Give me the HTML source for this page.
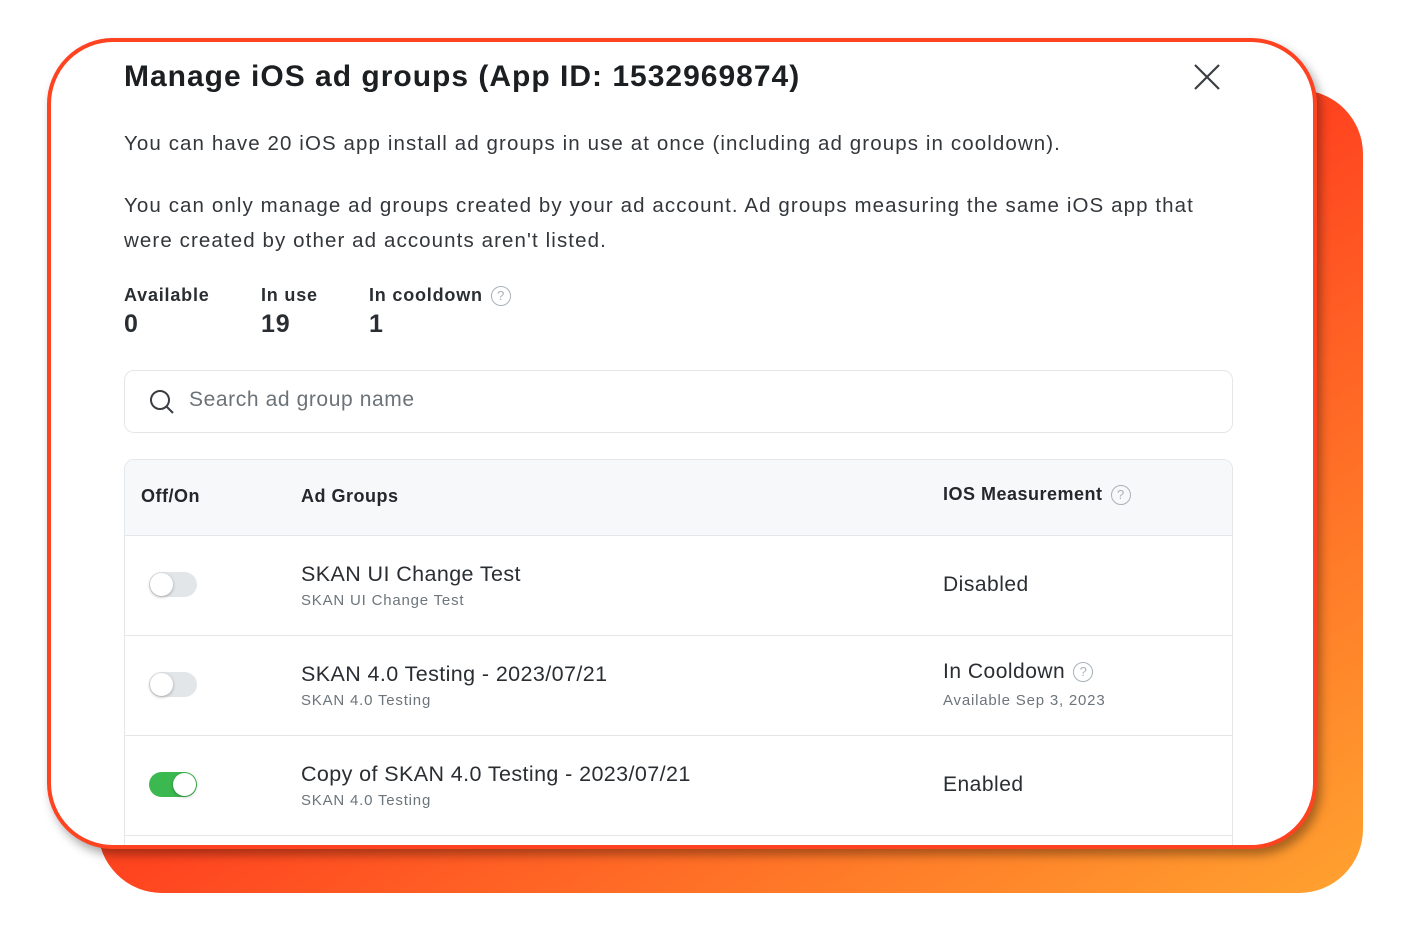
<!DOCTYPE html>
<html><head><meta charset="utf-8"><style>
*{box-sizing:border-box;margin:0;padding:0}
body{width:1407px;height:929px;background:#fff;position:relative;overflow:hidden;font-family:"Liberation Sans",sans-serif;color:#1f2328}
.bg{position:absolute;left:98px;top:90px;width:1265px;height:803px;border-radius:64px;background:linear-gradient(to bottom right,#ff4f22 0%,#ff4420 50%,#ff7a28 78%,#ffa330 100%)}
.card{position:absolute;left:47px;top:38px;width:1270px;height:811px;border:4px solid #ff4320;border-radius:66px;background:#fff;overflow:hidden;box-shadow:4px 6px 10px rgba(0,0,0,.35)}
.in{position:absolute;left:73px;top:0;right:0}
h1{position:absolute;top:18px;left:0;font-size:30px;font-weight:bold;color:#1c1f22;letter-spacing:1px;white-space:nowrap}
.x{position:absolute;left:1068px;top:20px}
p{position:absolute;left:0;font-size:20.5px;color:#33373b;line-height:35px;letter-spacing:1.1px;white-space:nowrap}
.st{position:absolute;top:243px;font-size:18px;font-weight:bold;color:#2a2e32;letter-spacing:.8px;white-space:nowrap}
.st b{display:block;font-size:25px;margin-top:4px}
.q{display:inline-block;width:20px;height:20px;border:1.5px solid #a9b2b8;border-radius:50%;color:#a9b2b8;font-size:13px;text-align:center;line-height:17px;font-weight:normal;vertical-align:middle;margin-left:8px;letter-spacing:0}
.search{position:absolute;left:0;top:328px;width:1109px;height:63px;border:1.5px solid #e3e7ea;border-radius:10px;font-size:21px;color:#6c7378;padding:17px 0 0 64px;letter-spacing:.6px}
.tbl{position:absolute;left:0;top:417px;width:1109px;height:420px;border:1.5px solid #e3e7ea;border-radius:10px;overflow:hidden}
.hd{height:76px;background:#f6f8f9;border-bottom:1.5px solid #e3e7ea;position:relative;font-size:18px;font-weight:bold;color:#24282c;letter-spacing:.5px}
.hd>span{position:absolute;top:26px;white-space:nowrap}
.row{height:100px;border-bottom:1.5px solid #e3e7ea;position:relative}
.tg{position:absolute;left:24px;top:36px;width:48px;height:25px;border-radius:13px;background:#e3e6e9}
.tg i{position:absolute;left:1px;top:1px;width:23px;height:23px;border-radius:50%;background:#fff;box-shadow:0 1px 3px rgba(0,0,0,.3)}
.tg.on{background:#3cb850}.tg.on i{left:24px}
.n{position:absolute;left:176px;top:26px;font-size:21.5px;color:#2a2e32;letter-spacing:.4px;white-space:nowrap}
.s{position:absolute;left:176px;top:56px;font-size:15px;color:#6c757b;letter-spacing:.8px;white-space:nowrap}
.m{position:absolute;left:818px;top:37px;font-size:21px;color:#2a2e32;letter-spacing:.5px;white-space:nowrap}
</style></head><body>
<div class="bg"></div>
<div class="card"><div class="in">
<h1>Manage iOS ad groups (App ID: 1532969874)</h1>
<svg class="x" width="30" height="30" viewBox="0 0 30 30"><path d="M3 3L27 27M27 3L3 27" stroke="#3a3e42" stroke-width="2.2"/></svg>
<p style="top:84px">You can have 20 iOS app install ad groups in use at once (including ad groups in cooldown).</p>
<p style="top:146px">You can only manage ad groups created by your ad account. Ad groups measuring the same iOS app that<br>were created by other ad accounts aren't listed.</p>
<div class="st" style="left:0">Available<b>0</b></div>
<div class="st" style="left:137px">In use<b>19</b></div>
<div class="st" style="left:245px">In cooldown<span class="q">?</span><b>1</b></div>
<div class="search"><svg style="position:absolute;left:23px;top:17px" width="28" height="28" viewBox="0 0 28 28"><circle cx="12" cy="12" r="9" fill="none" stroke="#3a3e42" stroke-width="2"/><path d="M18.5 18.5L25 25" stroke="#3a3e42" stroke-width="2"/></svg>Search ad group name</div>
<div class="tbl">
<div class="hd"><span style="left:16px">Off/On</span><span style="left:176px">Ad Groups</span><span style="left:818px;top:24px">IOS Measurement<span class="q">?</span></span></div>
<div class="row"><div class="tg"><i></i></div><div class="n">SKAN UI Change Test</div><div class="s">SKAN UI Change Test</div><div class="m">Disabled</div></div>
<div class="row"><div class="tg"><i></i></div><div class="n">SKAN 4.0 Testing - 2023/07/21</div><div class="s">SKAN 4.0 Testing</div><div class="m" style="top:24px">In Cooldown<span class="q">?</span></div><div class="s" style="left:818px">Available Sep 3, 2023</div></div>
<div class="row"><div class="tg on"><i></i></div><div class="n">Copy of SKAN 4.0 Testing - 2023/07/21</div><div class="s">SKAN 4.0 Testing</div><div class="m">Enabled</div></div>
</div>
</div></div>
</body></html>
